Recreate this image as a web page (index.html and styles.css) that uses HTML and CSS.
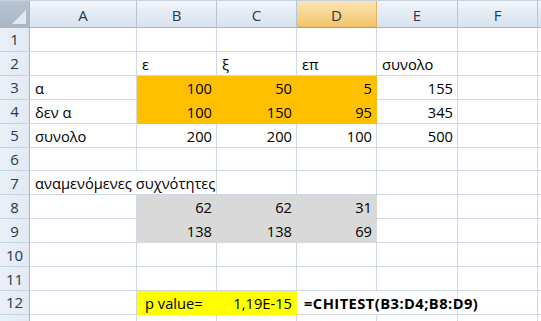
FILE: index.html
```html
<!DOCTYPE html>
<html>
<head>
<meta charset="utf-8">
<link rel="stylesheet" href="styles.css">
</head>
<body>
<div class="sheet">
  <div class="corner"><span class="tri"></span></div>
  <div class="ch">A</div><div class="ch">B</div><div class="ch">C</div><div class="ch sel">D</div><div class="ch">E</div><div class="ch">F</div><div class="ch"></div>

  <div class="rh">1</div><div class="c"></div><div class="c"></div><div class="c"></div><div class="c"></div><div class="c"></div><div class="c"></div><div class="c"></div>

  <div class="rh">2</div><div class="c"></div><div class="c">ε</div><div class="c">ξ</div><div class="c">επ</div><div class="c">συνολο</div><div class="c"></div><div class="c"></div>

  <div class="rh">3</div><div class="c">α</div><div class="c n or">100</div><div class="c n or">50</div><div class="c n or">5</div><div class="c n">155</div><div class="c"></div><div class="c"></div>

  <div class="rh">4</div><div class="c">δεν α</div><div class="c n or">100</div><div class="c n or">150</div><div class="c n or">95</div><div class="c n">345</div><div class="c"></div><div class="c"></div>

  <div class="rh">5</div><div class="c">συνολο</div><div class="c n">200</div><div class="c n">200</div><div class="c n">100</div><div class="c n">500</div><div class="c"></div><div class="c"></div>

  <div class="rh">6</div><div class="c"></div><div class="c"></div><div class="c"></div><div class="c"></div><div class="c"></div><div class="c"></div><div class="c"></div>

  <div class="rh">7</div><div class="c over">αναμενόμενες συχνότητες</div><div class="c nl"></div><div class="c"></div><div class="c"></div><div class="c"></div><div class="c"></div><div class="c"></div>

  <div class="rh">8</div><div class="c"></div><div class="c n gr">62</div><div class="c n gr">62</div><div class="c n gr">31</div><div class="c"></div><div class="c"></div><div class="c"></div>

  <div class="rh">9</div><div class="c"></div><div class="c n gr">138</div><div class="c n gr">138</div><div class="c n gr">69</div><div class="c"></div><div class="c"></div><div class="c"></div>

  <div class="rh">10</div><div class="c"></div><div class="c"></div><div class="c"></div><div class="c"></div><div class="c"></div><div class="c"></div><div class="c"></div>

  <div class="rh">11</div><div class="c"></div><div class="c"></div><div class="c"></div><div class="c"></div><div class="c"></div><div class="c"></div><div class="c"></div>

  <div class="rh">12</div><div class="c"></div><div class="c ye pv">p value=</div><div class="c n ye">1,19E-15</div><div class="c over b">=CHITEST(B3:D4;B8:D9)</div><div class="c nl"></div><div class="c"></div><div class="c"></div>

  <div class="rh"></div><div class="c"></div><div class="c"></div><div class="c"></div><div class="c"></div><div class="c"></div><div class="c"></div><div class="c"></div>
</div>
</body>
</html>
```
FILE: styles.css
```css
html, body {
  margin: 0;
  padding: 0;
  background: #ffffff;
  overflow: hidden;
}
.sheet {
  width: 541px;
  height: 321px;
  display: grid;
  grid-template-columns: 30px 107px 80px 80px 80px 81px 80px 10px;
  grid-template-rows: 27px repeat(12, 23.92px) 20px;
  font-family: "Open Sans", "Liberation Sans", sans-serif;
  font-size: 14.7px;
  color: #000;
  overflow: hidden;
  border-top: 1px solid #c5d1de;
  box-sizing: border-box;
}
.corner {
  position: relative;
  background: linear-gradient(#b7c3d1, #a9b6c6);
  border-right: 1px solid #9eb6ce;
  border-bottom: 1px solid #9eb6ce;
  box-sizing: border-box;
}
.tri {
  position: absolute;
  right: 3px;
  bottom: 3px;
  width: 0;
  height: 0;
  border-left: 14px solid transparent;
  border-bottom: 14px solid #e3e9f0;
}
.ch {
  background: linear-gradient(#f4f7fb 0%, #e4ebf4 45%, #d9e3ef 100%);
  border-right: 1px solid #b4c6da;
  border-bottom: 1px solid #9eb6ce;
  box-sizing: border-box;
  display: flex;
  align-items: center;
  justify-content: center;
  color: #27384f;
  font-size: 15px;
  padding-top: 1px;
}
.ch.sel {
  background: linear-gradient(#fbe3b4 0%, #f8d793 45%, #f2c26a 100%);
  border-right-color: #e6b25b;
  border-bottom-color: #c29a4e;
}
.rh {
  background: linear-gradient(90deg, #eaf0f7, #e2e9f3);
  border-right: 1px solid #9eb6ce;
  border-bottom: 1px solid #c5d3e2;
  box-sizing: border-box;
  display: flex;
  align-items: center;
  justify-content: center;
  color: #27384f;
  font-size: 15px;
}
.c {
  border-right: 1px solid #d0d7e5;
  border-bottom: 1px solid #d0d7e5;
  box-sizing: border-box;
  display: flex;
  align-items: flex-end;
  padding: 0 4px 1px 5px;
  white-space: nowrap;
  line-height: 20px;
}
.c.n {
  justify-content: flex-end;
}
.c.over {
  overflow: visible;
  border-right-color: transparent;
  position: relative;
  z-index: 1;
}
.c.or {
  background: #ffc000;
  border-color: #ffc000;
}
.c.gr {
  background: #d9d9d9;
  border-color: #d9d9d9;
}
.c.ye {
  background: #ffff00;
  border-color: #ffff00;
}
.c.pv {
  padding-left: 8px;
}
.c.b {
  font-weight: bold;
  letter-spacing: 0.45px;
  padding-left: 7px;
}
```
